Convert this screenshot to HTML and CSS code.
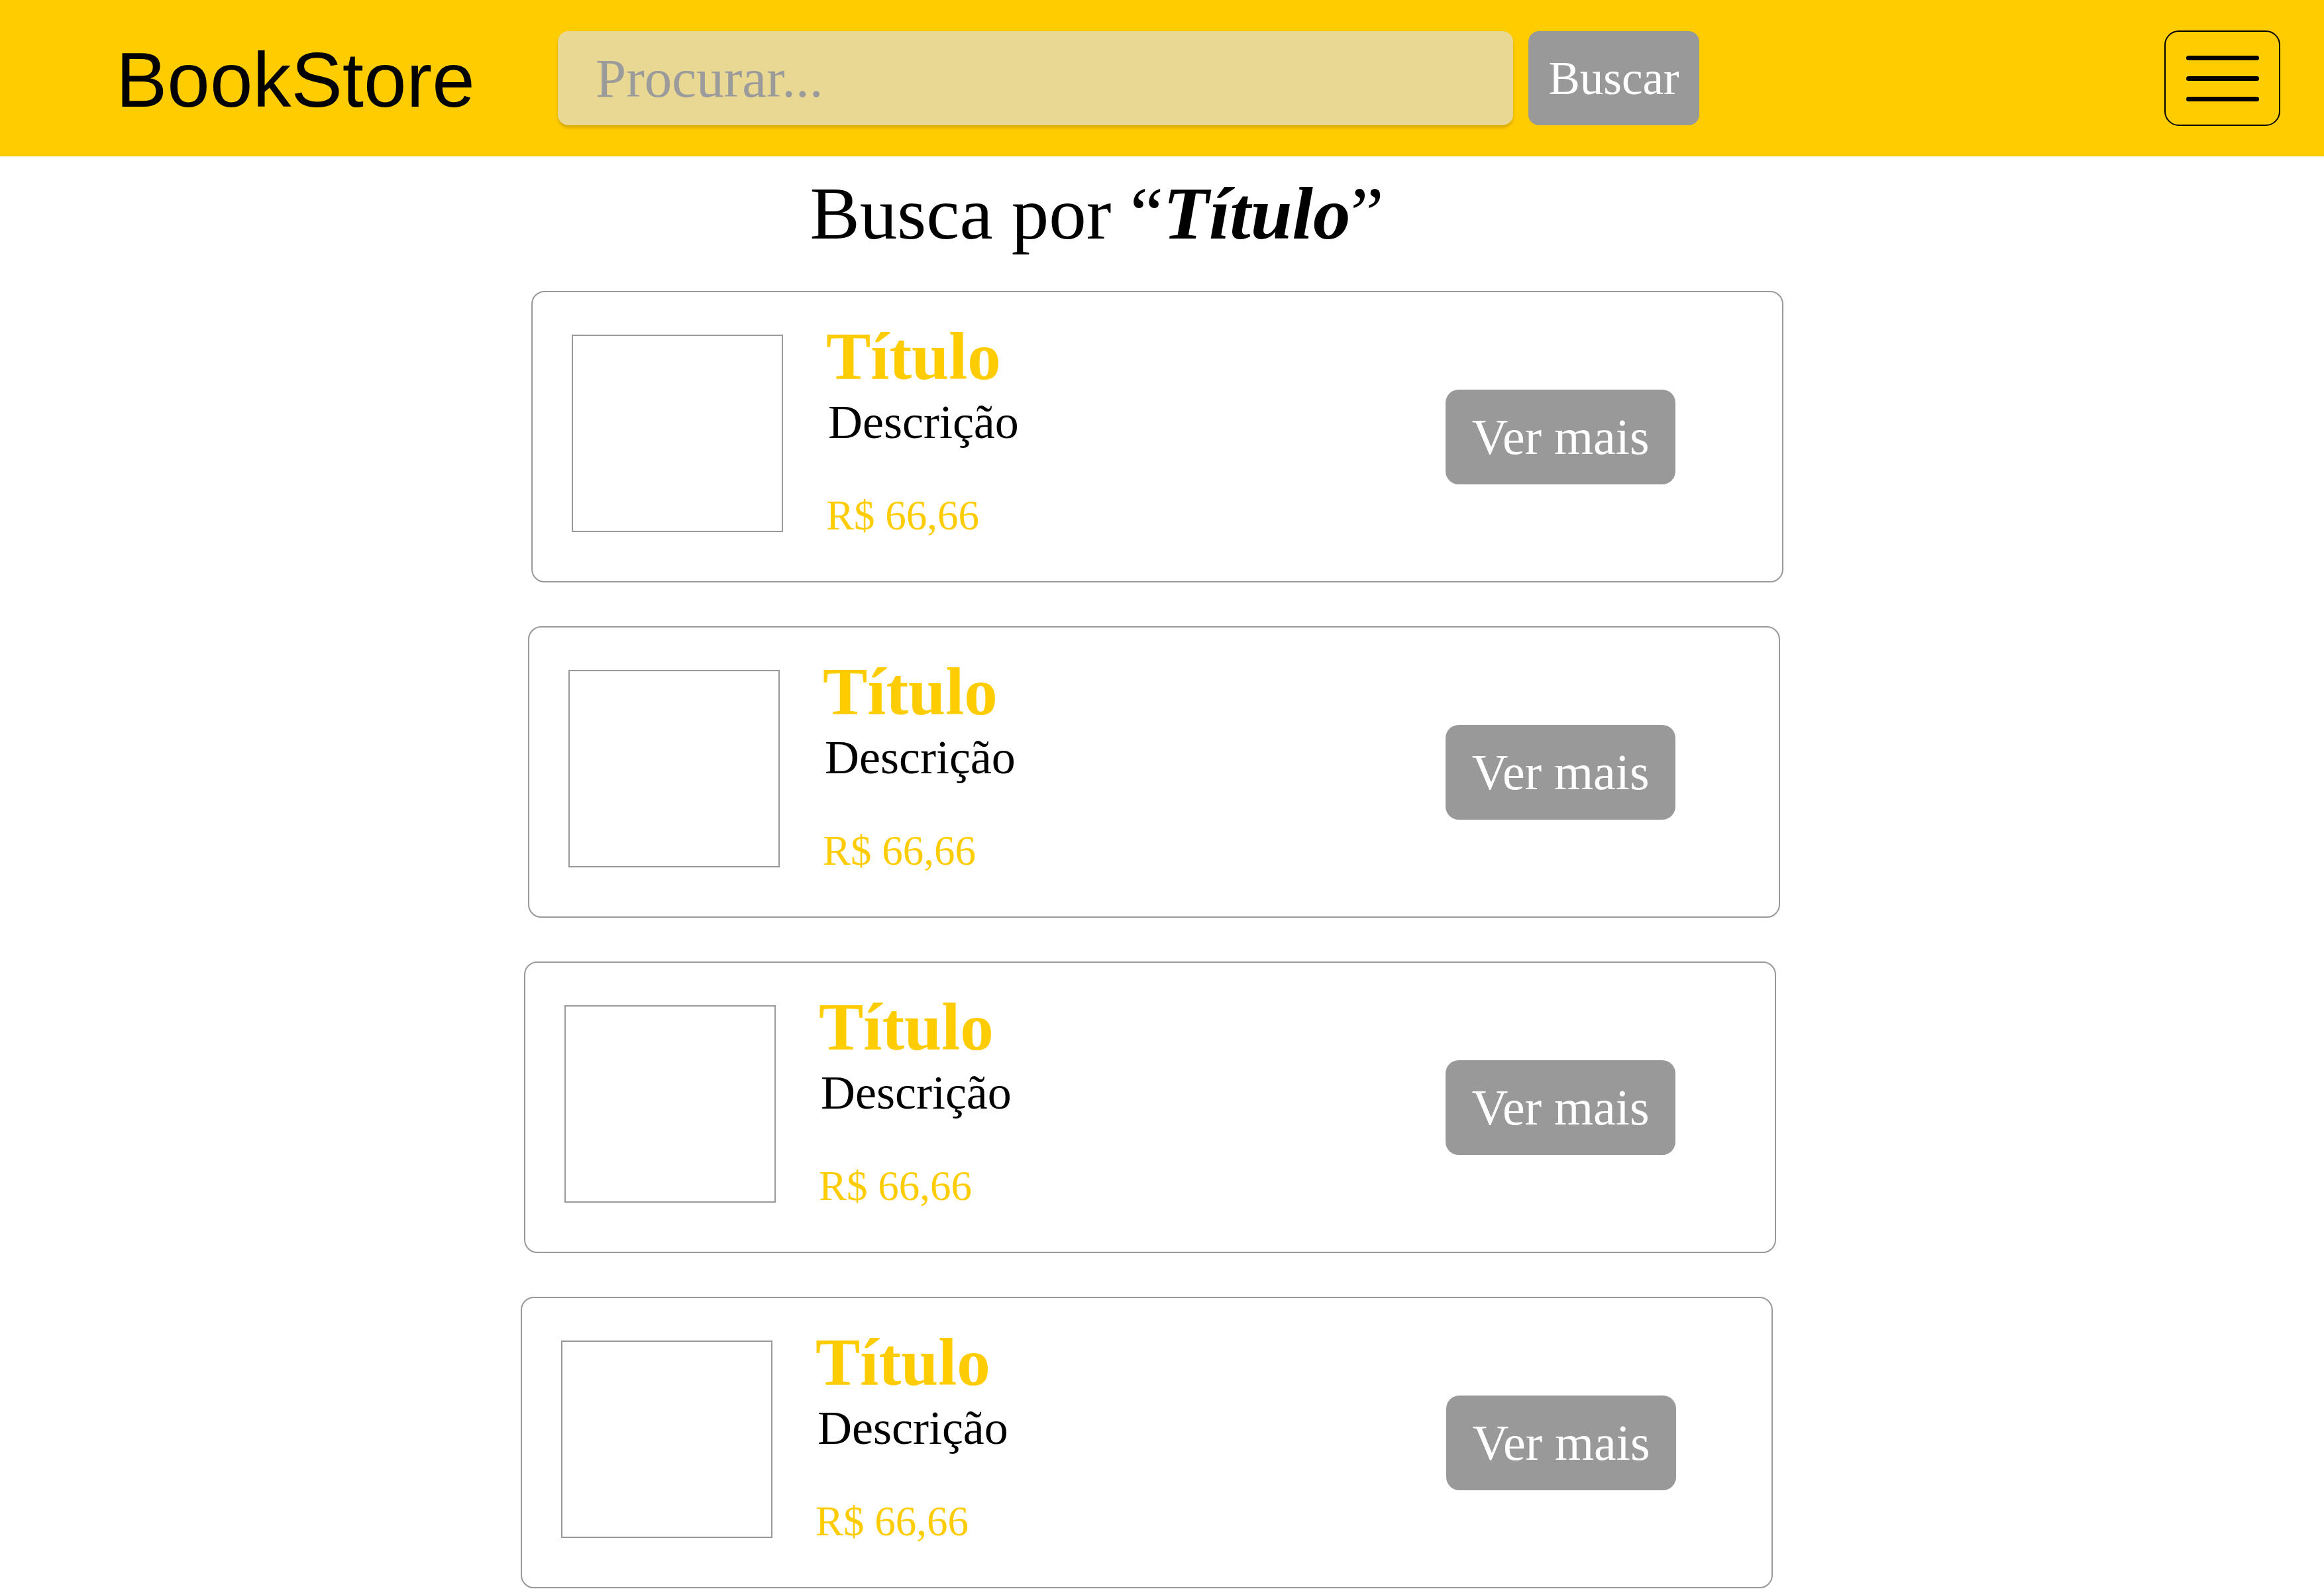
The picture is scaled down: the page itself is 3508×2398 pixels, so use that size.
FILE: index.html
```html
<!DOCTYPE html>
<html lang="pt-BR">
<head>
<meta charset="utf-8">
<title>BookStore - Busca</title>
<link rel="stylesheet" href="styles.css">
</head>
<body>
<header class="topbar">
  <div class="logo">BookStore</div>
  <form class="search">
    <input class="search-input" type="text" placeholder="Procurar...">
    <button class="search-btn" type="button">Buscar</button>
  </form>
  <button class="menu-btn" type="button" aria-label="Menu"><span></span><span></span><span></span></button>
</header>
<main class="content">
  <h1 class="results-title">Busca por “<em>Título</em>”</h1>
  <section class="results">
    <article class="card">
      <div class="cover"></div>
      <div class="info">
        <h2 class="book-title">Título</h2>
        <p class="book-desc">Descrição</p>
        <p class="book-price">R$ 66,66</p>
      </div>
      <button class="more-btn" type="button">Ver mais</button>
    </article>
    <article class="card">
      <div class="cover"></div>
      <div class="info">
        <h2 class="book-title">Título</h2>
        <p class="book-desc">Descrição</p>
        <p class="book-price">R$ 66,66</p>
      </div>
      <button class="more-btn" type="button">Ver mais</button>
    </article>
    <article class="card">
      <div class="cover"></div>
      <div class="info">
        <h2 class="book-title">Título</h2>
        <p class="book-desc">Descrição</p>
        <p class="book-price">R$ 66,66</p>
      </div>
      <button class="more-btn" type="button">Ver mais</button>
    </article>
    <article class="card">
      <div class="cover"></div>
      <div class="info">
        <h2 class="book-title">Título</h2>
        <p class="book-desc">Descrição</p>
        <p class="book-price">R$ 66,66</p>
      </div>
      <button class="more-btn" type="button">Ver mais</button>
    </article>
  </section>
</main>
</body>
</html>
```
FILE: styles.css
```css
* { box-sizing: border-box; }
html, body {
  margin: 0;
  padding: 0;
  overflow: hidden;
  background: #ffffff;
}
body {
  font-family: "Liberation Serif", "Times New Roman", serif;
  color: #000;
}

/* ---------- header ---------- */
.topbar {
  height: 236px;
  background: #ffcc00;
  display: flex;
  align-items: center;
  padding-left: 175px;
  padding-right: 66px;
}
.logo {
  width: 667px;
  flex: 0 0 auto;
  font-family: "Liberation Sans", Arial, sans-serif;
  font-size: 116px;
  line-height: 1;
  margin-top: 6px;
  color: #000;
}
.search {
  display: flex;
  align-items: center;
  gap: 23px;
  margin: 0;
}
.search-input {
  width: 1442px;
  height: 142px;
  border: none;
  border-radius: 16px;
  background: #e8d894;
  box-shadow: 0 4px 4px rgba(150, 110, 0, 0.35);
  padding: 0 0 0 57px;
  font-family: "Liberation Serif", "Times New Roman", serif;
  font-size: 83px;
  color: #333;
  outline: none;
}
.search-input::placeholder {
  color: #9b9b9b;
  opacity: 1;
}
.search-btn {
  width: 258px;
  height: 142px;
  border: none;
  border-radius: 16px;
  background: #999999;
  color: #ffffff;
  font-family: "Liberation Serif", "Times New Roman", serif;
  font-size: 71px;
  padding: 0;
}
.menu-btn {
  margin-left: auto;
  width: 175px;
  height: 144px;
  border: 2.5px solid #000;
  border-radius: 22px;
  background: transparent;
  padding: 0;
  display: flex;
  flex-direction: column;
  align-items: center;
  justify-content: center;
  gap: 24px;
}
.menu-btn span {
  display: block;
  width: 110px;
  height: 7px;
  border-radius: 4px;
  background: #000;
}

/* ---------- results ---------- */
.results-title {
  margin: 20px 0 0 0;
  padding-right: 197px;
  text-align: center;
  font-size: 113px;
  line-height: 132px;
  font-weight: normal;
}
.results-title em {
  font-style: italic;
  font-weight: bold;
}
.results {
  margin-top: 51px;
  display: flex;
  flex-direction: column;
  gap: 66px;
}
.card {
  width: 1890px;
  height: 440px;
  margin-left: 802px;
  border: 2px solid #999999;
  border-radius: 20px;
  display: flex;
  align-items: flex-start;
  padding: 64px 0 0 59px;
}
.card:nth-child(2) { margin-left: 797px; }
.card:nth-child(3) { margin-left: 791px; }
.card:nth-child(4) { margin-left: 786px; }

.cover {
  flex: 0 0 auto;
  width: 319px;
  height: 298px;
  border: 2px solid #999999;
  background: #fff;
}
.info {
  margin-left: 65px;
  display: flex;
  flex-direction: column;
}
.book-title {
  margin: 0;
  font-size: 101px;
  line-height: 66px;
  font-weight: bold;
  color: #ffcc00;
}
.book-desc {
  margin: 26px 0 0 3px;
  font-size: 72px;
  line-height: 80px;
  color: #000;
}
.book-price {
  margin: 66px 0 0 0;
  font-size: 63px;
  line-height: 70px;
  color: #ffcc00;
}
.more-btn {
  align-self: center;
  margin-top: -64px;
  margin-left: auto;
  margin-right: 161px;
  width: 347px;
  height: 143px;
  border: none;
  border-radius: 20px;
  background: #999999;
  color: #ffffff;
  font-family: "Liberation Serif", "Times New Roman", serif;
  font-size: 76px;
  padding: 0;
}
.card:nth-child(2) .more-btn { margin-right: 156px; }
.card:nth-child(3) .more-btn { margin-right: 150px; }
.card:nth-child(4) .more-btn { margin-right: 144px; }
```
